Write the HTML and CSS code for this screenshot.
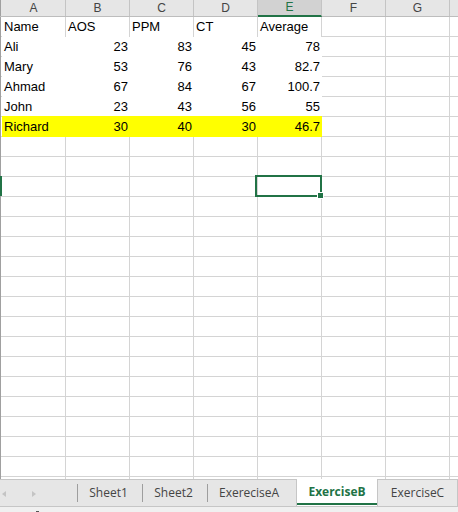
FILE: index.html
```html
<!DOCTYPE html>
<html>
<head>
<meta charset="utf-8">
<link rel="stylesheet" href="styles.css">
</head>
<body>
<div class="app">
  <div class="colhead">
    <div class="corner"></div>
    <div class="hc">A</div>
    <div class="hc">B</div>
    <div class="hc">C</div>
    <div class="hc">D</div>
    <div class="hc hc-sel">E</div>
    <div class="hc">F</div>
    <div class="hc">G</div>
    <div class="hc hc-last"></div>
  </div>
  <div class="cells">
    <div class="row row-head">
      <div class="c">Name</div><div class="c">AOS</div><div class="c">PPM</div><div class="c">CT</div><div class="c">Average</div>
    </div>
    <div class="row">
      <div class="c">Ali</div><div class="c n">23</div><div class="c n">83</div><div class="c n">45</div><div class="c n">78</div>
    </div>
    <div class="row">
      <div class="c">Mary</div><div class="c n">53</div><div class="c n">76</div><div class="c n">43</div><div class="c n">82.7</div>
    </div>
    <div class="row">
      <div class="c">Ahmad</div><div class="c n">67</div><div class="c n">84</div><div class="c n">67</div><div class="c n">100.7</div>
    </div>
    <div class="row">
      <div class="c">John</div><div class="c n">23</div><div class="c n">43</div><div class="c n">56</div><div class="c n">55</div>
    </div>
    <div class="row row-yellow">
      <div class="c">Richard</div><div class="c n">30</div><div class="c n">40</div><div class="c n">30</div><div class="c n">46.7</div>
    </div>
    <div class="rowmark"></div>
    <div class="selection"></div>
    <div class="handle"></div>
  </div>
  <div class="tabbar">
    <div class="nav">
      <svg width="8" height="8" viewBox="0 0 8 8" class="arr"><polygon points="5,1 1,4 5,7" fill="#c4c4c4"/></svg>
      <svg width="8" height="8" viewBox="0 0 8 8" class="arr arr-r"><polygon points="2,1 6,4 2,7" fill="#c4c4c4"/></svg>
    </div>
    <div class="sep"></div>
    <div class="tab t1">Sheet1</div>
    <div class="sep"></div>
    <div class="tab t2">Sheet2</div>
    <div class="sep"></div>
    <div class="tab t3">ExereciseA</div>
    <div class="tab tab-active">ExerciseB</div>
    <div class="tab tab-box">ExerciseC</div>
  </div>
  <div class="status"><span class="mark"></span></div>
</div>
</body>
</html>
```
FILE: styles.css
```css
* { box-sizing: border-box; }
html, body { margin: 0; padding: 0; }
body {
  width: 458px;
  height: 512px;
  overflow: hidden;
  background: #ffffff;
  font-family: "Liberation Sans", Arial, sans-serif;
}
.app {
  display: flex;
  flex-direction: column;
  width: 458px;
  height: 512px;
  overflow: hidden;
}
.colhead {
  display: flex;
  height: 17px;
  background: #e6e6e6;
  border-bottom: 1px solid #bdbdbd;
  flex-shrink: 0;
}
.corner {
  width: 2px;
  border-left: 1px solid #a0a0a0;
  flex-shrink: 0;
}
.hc {
  width: 64px;
  flex-shrink: 0;
  border-right: 1px solid #c4c4c4;
  font-size: 12px;
  line-height: 16px;
  text-align: center;
  color: #444444;
}
.hc-sel {
  background: #d2d2d2;
  color: #217346;
  border-bottom: 2px solid #217346;
  margin-bottom: -1px;
  line-height: 15px;
}
.hc-last { width: 20px; border-right: none; }

.cells {
  position: relative;
  height: 462px;
  border-left: 1px solid #a0a0a0;
  padding-left: 1px;
  background-image:
    repeating-linear-gradient(to right, transparent 0, transparent 63px, #d4d4d4 63px, #d4d4d4 64px),
    repeating-linear-gradient(to bottom, transparent 0, transparent 19px, #d4d4d4 19px, #d4d4d4 20px);
  background-position: 1px 0, 0 0;
  flex-shrink: 0;
}
.row {
  display: flex;
  height: 20px;
}
.c {
  width: 64px;
  height: 20px;
  flex-shrink: 0;
  background: #ffffff;
  font-size: 13px;
  line-height: 18px;
  padding: 1px 2px 0 2px;
  color: #000000;
  white-space: nowrap;
}
.n { text-align: right; }
.row-head .c { box-shadow: inset -1px 0 0 #d4d4d4; }
.row-yellow .c {
  background: #ffff00;
  box-shadow: 0 -1px 0 #ffff00;
}
.rowmark {
  position: absolute;
  left: -1px;
  top: 159px;
  width: 2px;
  height: 20px;
  background: #217346;
}
.selection {
  position: absolute;
  left: 254px;
  top: 158px;
  width: 67px;
  height: 22px;
  border: 2px solid #217346;
}
.handle {
  position: absolute;
  left: 316px;
  top: 175px;
  width: 7px;
  height: 7px;
  background: #217346;
  border: 1px solid #ffffff;
}

.tabbar {
  display: flex;
  align-items: stretch;
  height: 28px;
  background: #e6e6e6;
  border-top: 1px solid #c6c6c6;
  border-bottom: 1px solid #c6c6c6;
  flex-shrink: 0;
  font-family: "Open Sans", "Noto Sans", sans-serif;
  font-size: 12px;
  color: #444444;
}
.nav {
  width: 77px;
  display: flex;
  align-items: center;
  padding-left: 1px;
  gap: 21px;
  flex-shrink: 0;
}
.arr { display: block; margin-top: 1px; }
.sep {
  width: 1px;
  background: #9e9e9e;
  margin: 4px 0 4px 0;
  flex-shrink: 0;
}
.tab {
  line-height: 25px;
  text-align: center;
  flex-shrink: 0;
  white-space: nowrap;
}
.t1 { width: 64px; padding-right: 3px; }
.t2 { width: 64px; padding-right: 3px; }
.t3 { width: 88px; text-align: left; padding-left: 11px; }
.tab-active {
  width: 81px;
  background: #ffffff;
  color: #217346;
  font-weight: bold;
  border-left: 1px solid #c6c6c6;
  margin-top: -1px;
  line-height: 26px;
  position: relative;
}
.tab-active::after {
  content: "";
  position: absolute;
  left: 0;
  right: 0;
  bottom: 1px;
  height: 2px;
  background: #217346;
}
.tab-box {
  width: 81px;
  border-left: 1px solid #c6c6c6;
  border-right: 1px solid #c6c6c6;
  background: #e9e9e9;
}
.status {
  flex: 1;
  background: #f0f0f0;
  position: relative;
}
.mark {
  position: absolute;
  left: 36px;
  top: 4px;
  width: 3px;
  height: 2px;
  background: #555555;
}
```
